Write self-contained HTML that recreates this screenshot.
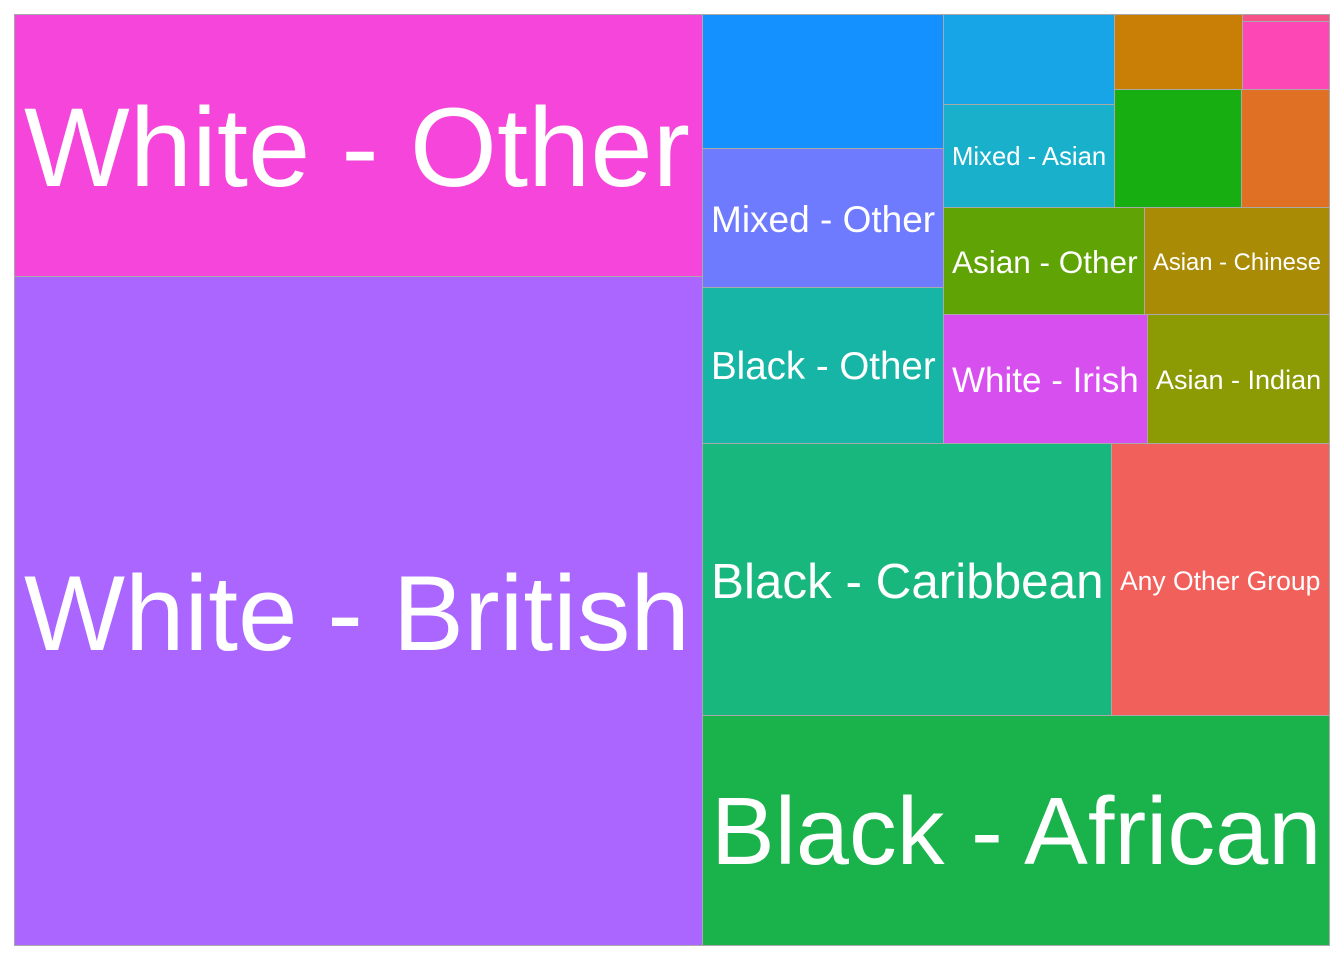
<!DOCTYPE html>
<html><head><meta charset="utf-8"><style>
html,body{margin:0;padding:0;background:#fff;width:1344px;height:960px;overflow:hidden}
.r{position:absolute;box-sizing:border-box;border:1px solid #a9a9a9;display:flex;align-items:center;padding-left:8px;padding-top:3px;color:#fff;font-family:"Liberation Sans",Arial,sans-serif;white-space:nowrap;overflow:hidden}
</style></head><body>
<div class="r" style="left:14px;top:14px;width:689px;height:263px;background:#f545da;font-size:112px;padding-left:9px">White - Other</div>
<div class="r" style="left:14px;top:276px;width:689px;height:670px;background:#aa66ff;font-size:107px;padding-left:9px">White - British</div>
<div class="r" style="left:702px;top:14px;width:242px;height:135px;background:#1490ff"></div>
<div class="r" style="left:702px;top:148px;width:242px;height:140px;background:#6e7bff;font-size:37px">Mixed - Other</div>
<div class="r" style="left:702px;top:287px;width:242px;height:157px;background:#17b5a6;font-size:38.5px">Black - Other</div>
<div class="r" style="left:943px;top:14px;width:172px;height:91px;background:#18a5e8"></div>
<div class="r" style="left:943px;top:104px;width:172px;height:104px;background:#19b0cc;font-size:25.7px">Mixed - Asian</div>
<div class="r" style="left:1114px;top:14px;width:129px;height:76px;background:#c97f06"></div>
<div class="r" style="left:1242px;top:14px;width:88px;height:8px;background:#f5528a;padding:0"></div>
<div class="r" style="left:1242px;top:21px;width:88px;height:69px;background:#fd47b4"></div>
<div class="r" style="left:1114px;top:89px;width:128px;height:119px;background:#17ae12"></div>
<div class="r" style="left:1241px;top:89px;width:89px;height:119px;background:#e07024"></div>
<div class="r" style="left:943px;top:207px;width:202px;height:108px;background:#60a304;font-size:31.5px">Asian - Other</div>
<div class="r" style="left:1144px;top:207px;width:186px;height:108px;background:#a98b05;font-size:23.8px">Asian - Chinese</div>
<div class="r" style="left:943px;top:314px;width:205px;height:130px;background:#d84ff0;font-size:35px">White - Irish</div>
<div class="r" style="left:1147px;top:314px;width:183px;height:130px;background:#8c9a04;font-size:27px">Asian - Indian</div>
<div class="r" style="left:702px;top:443px;width:410px;height:273px;background:#18b77e;font-size:49.4px">Black - Caribbean</div>
<div class="r" style="left:1111px;top:443px;width:219px;height:273px;background:#f2605c;font-size:26.5px">Any Other Group</div>
<div class="r" style="left:702px;top:715px;width:628px;height:231px;background:#19b24b;font-size:95.5px">Black - African</div>
</body></html>
